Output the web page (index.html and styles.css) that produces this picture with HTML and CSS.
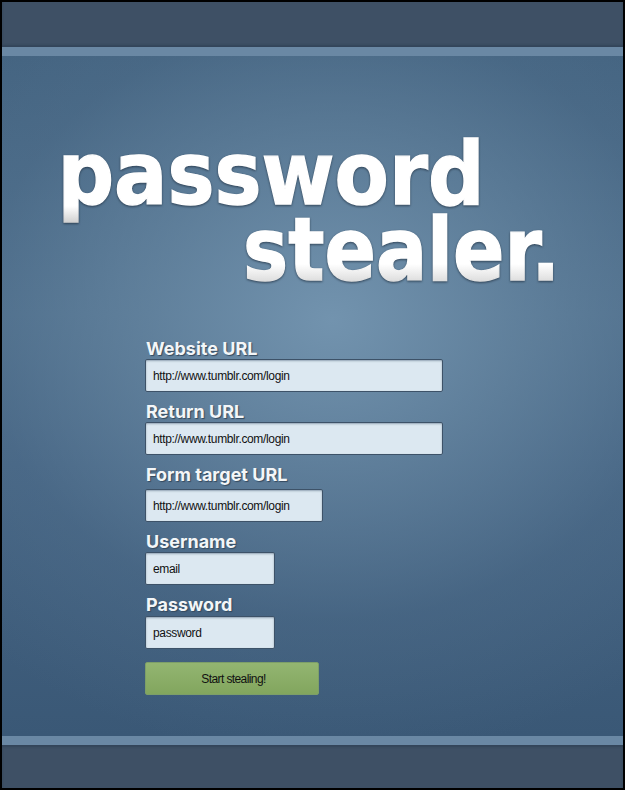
FILE: index.html
```html
<!DOCTYPE html>
<html lang="en">
<head>
<meta charset="utf-8">
<title>password stealer.</title>
<link rel="stylesheet" href="styles.css">
</head>
<body>
<div class="page">
  <header class="bar bar-top"></header>
  <main class="main">
    <h1 class="title">
      <svg class="title-art" width="621" height="240" viewBox="2 56 621 240">
        <defs>
          <linearGradient id="g1" gradientUnits="userSpaceOnUse" x1="0" y1="206" x2="0" y2="223">
            <stop offset="0" stop-color="#fff"/><stop offset="1" stop-color="#cfcfcf"/>
          </linearGradient>
          <linearGradient id="g2" gradientUnits="userSpaceOnUse" x1="0" y1="264" x2="0" y2="282">
            <stop offset="0" stop-color="#fff"/><stop offset="1" stop-color="#dcdcdc"/>
          </linearGradient>
        </defs>
        <text x="57.500" y="204" textLength="427" lengthAdjust="spacingAndGlyphs" fill="url(#g1)" stroke="url(#g1)">password</text>
        <text x="243" y="280" textLength="317" lengthAdjust="spacingAndGlyphs" fill="url(#g2)" stroke="url(#g2)">stealer.</text>
      </svg>
    </h1>
    <div class="form">
      <label class="field"><span class="label">Website URL</span><input class="input wide" type="text" value="http://www.tumblr.com/login"></label>
      <label class="field"><span class="label">Return URL</span><input class="input wide" type="text" value="http://www.tumblr.com/login"></label>
      <label class="field field-target"><span class="label">Form target URL</span><input class="input medium" type="text" value="http://www.tumblr.com/login"></label>
      <label class="field"><span class="label">Username</span><input class="input small" type="text" value="email"></label>
      <label class="field field-password"><span class="label">Password</span><input class="input small" type="text" value="password"></label>
      <button class="button" type="button">Start stealing!</button>
    </div>
  </main>
  <footer class="bar bar-bottom"></footer>
</div>
</body>
</html>
```
FILE: styles.css
```css
* { box-sizing: border-box; }
body { margin: 0; background: #000; }
.page {
  width: 625px;
  height: 790px;
  border: 2px solid #000;
  display: flex;
  flex-direction: column;
  overflow: hidden;
}
.bar { background: #3e5065; flex: none; }
.bar-top {
  height: 54px;
  border-bottom: 9px solid #6a88a4;
  box-shadow: inset 0 -2px 2px #33455a;
}
.bar-bottom {
  height: 52px;
  border-top: 9px solid #6a88a4;
  box-shadow: inset 0 2px 2px #33455a;
}
.main {
  flex: 1;
  min-height: 0;
  background:
    radial-gradient(ellipse 520px 440px at 330px 264px, rgba(116, 149, 176, .95) 0%, rgba(104, 136, 163, .7) 35%, rgba(84, 115, 144, .35) 68%, rgba(66, 97, 127, 0) 100%),
    linear-gradient(#42627f 0%, #4e6e8b 38%, #456483 60%, #3a5876 100%);
}
.title { margin: 0; height: 240px; }
.title-art {
  display: block;
  font: 700 87px "DejaVu Sans", sans-serif;
  stroke-width: 1.4px;
  filter: drop-shadow(0 1px 1px rgba(25, 40, 55, .7));
}
.form {
  display: flex;
  flex-direction: column;
  align-items: flex-start;
  margin: 40px 0 0 143px;
}
.field { display: flex; flex-direction: column; margin-bottom: 7px; }
.label {
  height: 23px;
  padding-left: 1px;
  font: 700 18px/25px Inter, "Open Sans", sans-serif;
  letter-spacing: 0;
  color: #f3f6f8;
  text-shadow: 1px 1px 1px #34495e;
  white-space: nowrap;
}
.field-target .label { height: 27px; }
.field-password .label { height: 24px; }
.input {
  height: 33px;
  margin: 0;
  padding: 0 7px;
  border: 1px solid #3d5268;
  border-radius: 2px;
  background: #dce8f1;
  box-shadow: inset 0 1px 2px #91a3b3;
  font: 12px "Liberation Sans", Arial, sans-serif;
  letter-spacing: -.35px;
  color: #111;
}
.wide { width: 298px; }
.medium { width: 178px; }
.small { width: 130px; }
.button {
  width: 174px;
  height: 33px;
  margin-top: 6px;
  padding: 0 0 0 3px;
  border: 1px solid #7d9f68;
  border-radius: 2px;
  background: linear-gradient(#93b571, #82a65e);
  font: 12px "Liberation Sans", Arial, sans-serif;
  letter-spacing: -.6px;
  color: #111;
}
```
